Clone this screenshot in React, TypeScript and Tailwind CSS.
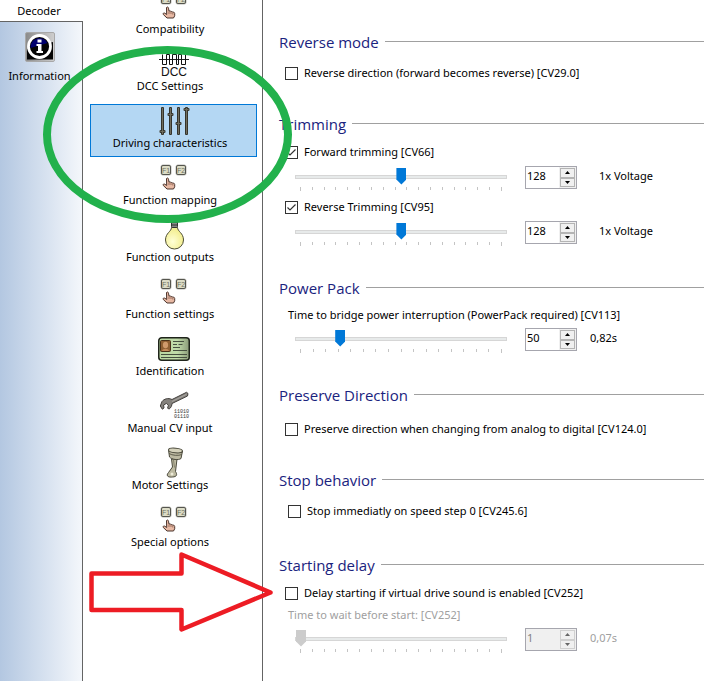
import { useState, type ReactNode } from 'react';

function KeysIcon() {
  return (
    <svg width="32" height="32" viewBox="0 0 32 32">
      {[3, 18].map((x, i) => (
        <g key={x}>
          <rect x={x - 0.5} y="2.5" width="11" height="11" rx="2.5" fill="#b9b9b4" />
          <rect x={x + 0.5} y="3.5" width="9" height="9" rx="1.5" fill="#dcdcc6" stroke="#55554e" />
          <text x={x + 5} y="11" textAnchor="middle" fontFamily="Liberation Sans, sans-serif" fontSize="7" fill="#6e6e60">
            {i === 0 ? 'F1' : 'F2'}
          </text>
        </g>
      ))}
      <path
        d="M8.500 16.500c.8-1 2-.3 2 .7l.5 3c.8-.7 1.700-.3 2 .5.8-.5 1.500-.2 1.800.6 1-.4 1.900.2 1.900 1.200v2.300L15.500 27h-6.500l-3.700-3.500c-.7-1.100.5-2 1.500-1.300L8.700 23.500z"
        fill="#e8b9a4"
        stroke="#4b342c"
        strokeWidth="1"
      />
      <path d="M11 20.500v2.500M13 21v2M14.800 21.800v1.700" stroke="#7a5144" strokeWidth=".7" />
    </svg>
  );
}

function DccIcon() {
  return (
    <svg width="32" height="32" viewBox="0 0 32 32" fill="none">
      <path d="M1 11.500h30" stroke="#222" />
      <path
        d="M4.500 6.500v10h4v-10M8.500 6.500h3v10h3v-10h4v10h2v-10h3v10h4v-10"
        stroke="#111"
      />
      <text x="16" y="28" textAnchor="middle" fontFamily="Liberation Sans, sans-serif" fontSize="12" fill="#111">
        DCC
      </text>
    </svg>
  );
}

function FadersIcon() {
  const bars = [
    [4.5, 26.5],
    [12.5, 9.5],
    [20.5, 18.5],
    [28.5, 4.5],
  ];
  return (
    <svg width="32" height="32" viewBox="0 0 32 32">
      {bars.map(([x, y]) => (
        <g key={x}>
          <rect x={x - 3} y={y - 1.5} width="6" height="3" rx="1" fill="#3c3b33" />
          <rect x={x - 1.5} y="2" width="3" height="28" rx="1" fill="#35342c" />
          <path d={`M${x} 3v26M${x - 2} ${y}h4`} stroke="#6f6d5e" strokeWidth="1" />
        </g>
      ))}
    </svg>
  );
}

function BulbIcon() {
  return (
    <svg width="32" height="32" viewBox="0 0 32 32">
      <defs>
        <radialGradient id="bulb" cx=".4" cy=".65" r=".6">
          <stop offset="0" stopColor="#ffffd6" />
          <stop offset="1" stopColor="#f3ee90" />
        </radialGradient>
      </defs>
      <path
        d="M13.500 8.500c0 4-6 5.500-6 12.500a9 9 0 0 0 18 0c0-7-6-8.500-6-12.500z"
        fill="url(#bulb)"
        stroke="#4d4d33"
        strokeWidth="1"
      />
      <rect x="13.500" y="0.500" width="6" height="8" rx="1" fill="#888" stroke="#333" />
      <path d="M13.500 3.500h6M13.500 6h6" stroke="#333" />
    </svg>
  );
}

function CardIcon() {
  return (
    <svg width="32" height="32" viewBox="0 0 32 32">
      <defs>
        <linearGradient id="card" x1="0" x2="1">
          <stop offset="0" stopColor="#b9d7a0" />
          <stop offset=".6" stopColor="#c0dba9" />
          <stop offset="1" stopColor="#8c9c7a" />
        </linearGradient>
      </defs>
      <rect x=".75" y="4.750" width="30.500" height="22.500" rx="3" fill="url(#card)" stroke="#1f241b" strokeWidth="1.500" />
      <rect x="2.500" y="7.500" width="10" height="11" rx="1" fill="#8f5f33" stroke="#4a3018" />
      <ellipse cx="7.500" cy="12" rx="2.600" ry="3.200" fill="#d09a6c" />
      <path d="M4 18c.5-3 6.500-3 7 0z" fill="#c48a5a" />
      <path d="M15 8.500h11M15 11.500h4M20.500 11.500h4M15 14.500h7M15 17.500h14M3 21.500h26M3 24.500h26" stroke="#465040" />
    </svg>
  );
}

function WrenchIcon() {
  return (
    <svg width="32" height="32" viewBox="0 0 32 32">
      <path
        d="M30 3.500L28.500 2.300 14 9.500C10 7.500 6 9 4 11.500L2.300 16l2 3.200L6 18l-.4-3 2.800-1.600 2 1.800-.8 3 1.500.8c2-1.200 2.800-3.500 2.900-5.500L29.500 6z"
        fill="#85827d"
        stroke="#44413e"
        strokeWidth="1"
      />
      <path d="M14 11.500l14.500-7.200" stroke="#aaa7a2" strokeWidth="1" />
      <g fontFamily="Liberation Mono, monospace" fontSize="5" fill="#333">
        <text x="16" y="23">11010</text>
        <text x="16" y="28">01110</text>
      </g>
    </svg>
  );
}

function PistonIcon() {
  return (
    <svg width="32" height="32" viewBox="0 0 32 32">
      <g fill="#bdbaa2" stroke="#4b4a3c" strokeWidth="1">
        <path d="M13.500 12l1 8-4 5.500c-3.500 4 1 5 4 4.500 4.500-.2 5-2.500 3-5.500L19 12z" />
        <path d="M10.500 3l1 7c2 2.500 9 3.500 11.500 1.500L24.500 4z" />
        <ellipse cx="17.500" cy="3.500" rx="7" ry="2.300" fill="#d5d2bb" transform="rotate(5 17.500 3.500)" />
      </g>
      <path d="M11 6.500c3 2 9.500 2.500 13 1" stroke="#5d5b4a" fill="none" />
      <path d="M15.500 13l1 7.500" stroke="#85826d" />
      <circle cx="14" cy="27" r="1.500" fill="#eeecd9" />
    </svg>
  );
}

function InfoIcon() {
  return (
    <svg width="30" height="30" viewBox="0 0 30 30">
      <defs>
        <linearGradient id="info" x1="0" y1="0" x2="1" y2="0">
          <stop offset="0" stopColor="#8a8a8a" />
          <stop offset="1" stopColor="#cfcfcf" />
        </linearGradient>
      </defs>
      <rect x=".5" y=".5" width="29" height="29" rx="1.500" fill="url(#info)" stroke="#a8a8a8" />
      <path d="M2 17L28 10v17.500H2z" fill="#050505" />
      <circle cx="14.500" cy="14.500" r="11" fill="#050505" stroke="#fff" strokeWidth="2.800" />
      <path d="M5.500 16a9 9 0 0 1 17-5z" fill="#00006e" />
      <path d="M12.500 7.500h4v3h-4zM11.500 12h5v7H18v2h-6.500v-2H13v-5h-1.500z" fill="#fff" />
    </svg>
  );
}

const navItems = [
  { label: 'Compatibility', icon: <KeysIcon /> },
  { label: 'DCC Settings', icon: <DccIcon /> },
  { label: 'Driving characteristics', icon: <FadersIcon />, active: true },
  { label: 'Function mapping', icon: <KeysIcon /> },
  { label: 'Function outputs', icon: <BulbIcon /> },
  { label: 'Function settings', icon: <KeysIcon /> },
  { label: 'Identification', icon: <CardIcon /> },
  { label: 'Manual CV input', icon: <WrenchIcon /> },
  { label: 'Motor Settings', icon: <PistonIcon /> },
  { label: 'Special options', icon: <KeysIcon /> },
];

function Section({ title, children }: { title: string; children: ReactNode }) {
  return (
    <section>
      <div className="flex items-center gap-[6px]">
        <h2 className="font-['Open_Sans',sans-serif] text-[15px] leading-[22px] text-[#1a237e]">{title}</h2>
        <div className="mb-[2px] h-px flex-1 bg-[#a0a0a0]" />
      </div>
      {children}
    </section>
  );
}

function Check({ label, checked = false }: { label: string; checked?: boolean }) {
  const [on, setOn] = useState(checked);
  return (
    <label className="flex h-5 items-center gap-[6px] pl-[6px]">
      <span className="relative flex size-[13px]">
        <input
          type="checkbox"
          checked={on}
          onChange={(e) => setOn(e.target.checked)}
          className="size-[13px] appearance-none border border-[#333] bg-white"
        />
        {on && (
          <svg className="pointer-events-none absolute inset-0" width="13" height="13" viewBox="0 0 13 13" fill="none">
            <path d="M2.500 6.500l2.500 2.500 5.500-5.500" stroke="#333" strokeWidth="1.200" />
          </svg>
        )}
      </span>
      {label}
    </label>
  );
}

type SliderProps = {
  name: string;
  initial: number;
  min?: number;
  ticks?: number;
  unit: string;
  wide?: boolean;
  disabled?: boolean;
};

function SliderRow({ name, initial, min = 0, ticks = 18, unit, wide, disabled }: SliderProps) {
  const [value, setValue] = useState(initial);
  const set = (v: number) => setValue(Math.max(min, Math.min(255, v || 0)));
  const spin =
    'flex h-[10px] w-[15px] items-center justify-center border border-[#b4b4b4] bg-[#f0f0f0] text-black disabled:border-[#d0d0d0] disabled:text-[#666]';

  return (
    <div className="flex items-start pl-4">
      <div className="w-[212px] pt-[2px]">
        <input
          type="range"
          aria-label={name}
          min={min}
          max={255}
          value={value}
          disabled={disabled}
          onChange={(e) => set(Number(e.target.value))}
          className="block h-[17px] w-full appearance-none bg-transparent [&::-webkit-slider-runnable-track]:h-1 [&::-webkit-slider-runnable-track]:border [&::-webkit-slider-runnable-track]:border-[#d6d6d6] [&::-webkit-slider-runnable-track]:bg-[#e7eaea] [&::-webkit-slider-thumb]:-mt-[8px] [&::-webkit-slider-thumb]:h-[17px] [&::-webkit-slider-thumb]:w-[10px] [&::-webkit-slider-thumb]:appearance-none [&::-webkit-slider-thumb]:bg-[#0078d7] [&::-webkit-slider-thumb]:[clip-path:polygon(0_0,100%_0,100%_70%,50%_100%,0_70%)] disabled:[&::-webkit-slider-thumb]:bg-[#cccccc]"
        />
        <div className="mt-[2px] flex justify-between px-[5px]">
          {Array.from({ length: ticks }, (_, i) => (
            <span key={i} className="h-[3px] w-px bg-[#c4c4c4] first:h-1 last:h-1" />
          ))}
        </div>
      </div>
      <div className={`ml-[18px] flex h-[23px] w-[52px] border border-[#a6a6ae] ${disabled ? 'bg-[#f0f0f0]' : 'bg-white'}`}>
        <input
          type="text"
          aria-label={`${name} value`}
          value={value}
          disabled={disabled}
          onChange={(e) => set(Number(e.target.value))}
          className="h-[18px] min-w-0 flex-1 pl-px disabled:text-[#838383]"
        />
        <div className="flex flex-col bg-[#f0f0f0] p-px">
          <button type="button" aria-label={`Increase ${name}`} disabled={disabled} onClick={() => set(value + 1)} className={spin}>
            <svg width="5" height="3" viewBox="0 0 5 3"><path d="M0 3L2.500 0 5 3z" fill="currentColor" /></svg>
          </button>
          <button type="button" aria-label={`Decrease ${name}`} disabled={disabled} onClick={() => set(value - 1)} className={spin}>
            <svg width="5" height="3" viewBox="0 0 5 3"><path d="M0 0h5L2.500 3z" fill="currentColor" /></svg>
          </button>
        </div>
      </div>
      <span className={`h-5 leading-5 ${wide ? 'ml-[22px]' : 'ml-[13px]'} ${disabled ? 'text-[#a0a0a0]' : ''}`}>{unit}</span>
    </div>
  );
}

export default function App() {
  return (
    <div className="relative flex h-screen overflow-hidden bg-white font-['Noto_Sans',sans-serif] text-[11px] leading-5 text-black">
      {/* Decoder tab */}
      <aside className="flex w-[83px] shrink-0 flex-col">
        <div className="h-[21px] pt-px pr-[5px] text-center">Decoder</div>
        <div className="flex-1 border-t border-r border-[#646464] bg-linear-to-r from-[#b3c7e1] to-[#f4f7fb] pt-[10px] pl-px">
          <button type="button" className="flex w-[77px] flex-col items-center gap-1">
            <InfoIcon />
            <span className="whitespace-nowrap">Information</span>
          </button>
        </div>
      </aside>

      {/* Settings pages */}
      <nav className="flex w-[180px] shrink-0 flex-col border-r border-[#646464] pr-[5px] pl-[7px]">
        <div className="-mt-[10px] flex flex-col gap-1">
          {navItems.map((item) => (
            <button
              key={item.label}
              type="button"
              className={`flex h-[53px] flex-col items-center border ${
                item.active ? 'border-[#0078d7] bg-[#b4d7f3]' : 'border-transparent'
              }`}
            >
              {item.icon}
              <span className="-mt-1 pr-[7px] whitespace-nowrap">{item.label}</span>
            </button>
          ))}
        </div>
      </nav>

      {/* Driving characteristics */}
      <main className="min-w-0 flex-1 pt-[31px] pl-4">
        <Section title="Reverse mode">
          <div className="pt-[10px] pb-[30px]">
            <Check label="Reverse direction (forward becomes reverse) [CV29.0]" />
          </div>
        </Section>
        <Section title="Trimming">
          <div className="flex flex-col gap-1 pt-[7px] pb-[31px]">
            <Check label="Forward trimming [CV66]" checked />
            <SliderRow name="Forward trimming" initial={128} unit="1x Voltage" wide />
            <div className="pt-[2px]">
              <Check label="Reverse Trimming [CV95]" checked />
            </div>
            <SliderRow name="Reverse Trimming" initial={128} unit="1x Voltage" wide />
          </div>
        </Section>
        <Section title="Power Pack">
          <div className="pt-[6px] pb-[31px]">
            <p className="pb-[3px] pl-[9px]">Time to bridge power interruption (PowerPack required) [CV113]</p>
            <SliderRow name="Power interruption time" initial={50} ticks={17} unit="0,82s" />
          </div>
        </Section>
        <Section title="Preserve Direction">
          <div className="pt-[13px] pb-[30px]">
            <Check label="Preserve direction when changing from analog to digital [CV124.0]" />
          </div>
        </Section>
        <Section title="Stop behavior">
          <div className="pt-[10px] pb-[33px] pl-[3px]">
            <Check label="Stop immediatly on speed step 0 [CV245.6]" />
          </div>
        </Section>
        <Section title="Starting delay">
          <div className="pt-[7px]">
            <Check label="Delay starting if virtual drive sound is enabled [CV252]" />
            <p className="pt-[2px] pb-[3px] pl-[9px] text-[#a0a0a0]">Time to wait before start: [CV252]</p>
            <SliderRow name="Starting delay" initial={1} min={1} unit="0,07s" disabled />
          </div>
        </Section>
      </main>

      {/* Pen marks over the window */}
      <svg className="pointer-events-none absolute top-0 left-0" width="704" height="681" viewBox="0 0 704 681" fill="none">
        <ellipse cx="167.500" cy="134.500" rx="120.500" ry="84.500" stroke="#22b14c" strokeWidth="8" />
        <path d="M91.500 573.500h90v-19l89 38-89 37v-19.500h-90z" stroke="#ed1c24" strokeWidth="4.500" strokeLinejoin="round" />
      </svg>
    </div>
  );
}
